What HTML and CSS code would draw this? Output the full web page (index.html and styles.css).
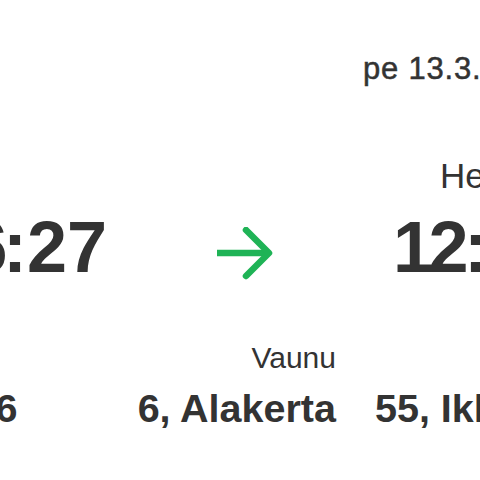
FILE: index.html
```html
<!DOCTYPE html>
<html lang="fi">
<head>
    <meta charset="UTF-8">
    <meta name="viewport" content="width=device-width, initial-scale=1.0">
    <title>Matkalippu</title>
    <link rel="stylesheet" href="styles.css">
</head>
<body>
    <div class="ticket">
        <!-- Päivämäärä -->
        <div class="date">pe 13.3.</div>

        <!-- Lähtö ja saapuminen -->
        <div class="route">
            <div class="stop stop-dep">
                <div class="time"><span class="hours">06</span>:27</div>
            </div>
            <svg class="arrow" width="56" height="54" viewBox="0 0 56 54">
                <line x1="0" y1="26" x2="51" y2="26"></line>
                <polyline points="29,3 52,26 29,49"></polyline>
            </svg>
            <div class="stop stop-arr">
                <div class="city">Helsinki</div>
                <div class="time"><span class="hours">12</span>:03</div>
            </div>
        </div>

        <!-- Paikkatiedot -->
        <div class="details">
            <div class="field">
                <div class="value">IC 26</div>
            </div>
            <div class="field">
                <div class="label">Vaunu</div>
                <div class="value">6, Alakerta</div>
            </div>
            <div class="field">
                <div class="label">Istuin</div>
                <div class="value">55, Ikkuna</div>
            </div>
        </div>
    </div>
</body>
</html>
```

FILE: styles.css
```css
body {
    font-family: "Liberation Sans", Arial, sans-serif;
    background-color: #ffffff;
    color: #333333;
    margin: 0;
    overflow: hidden;
}

.ticket {
    width: 760px;
    margin-left: -77px;
    padding-top: 53px;
}

.date {
    font-size: 31px;
    line-height: 1;
    letter-spacing: 0.8px;
    -webkit-text-stroke: 0.5px #333333;
    padding-left: 440px;
}

.route {
    display: grid;
    grid-template-columns: 184px 286px auto;
    align-items: end;
    margin-top: 74px;
}

.stop-dep {
    text-align: right;
}

.city {
    font-size: 35px;
    line-height: 1;
    padding-left: 47px;
    margin-bottom: 18px;
}

.time {
    font-size: 72px;
    font-weight: bold;
    line-height: 1;
    white-space: nowrap;
}

/* tiukempi tunnit + kaksoispiste kuten alkuperäisessä fontissa */
.hours {
    letter-spacing: -4.5px;
}

.arrow {
    justify-self: start;
    margin-left: 110px;
    margin-bottom: 2px;
    fill: none;
    stroke: #1fb356;
    stroke-width: 6.5;
    stroke-linejoin: round;
}

.arrow polyline {
    stroke-linecap: round;
}

.details {
    display: grid;
    grid-template-columns: 94px 319px 230px;
    align-items: end;
    margin-top: 60px;
}

.field {
    text-align: right;
    white-space: nowrap;
}

.label {
    font-size: 30px;
    line-height: 1;
    margin-bottom: 16px;
}

.value {
    font-size: 39.5px;
    font-weight: bold;
    line-height: 1;
}
```
